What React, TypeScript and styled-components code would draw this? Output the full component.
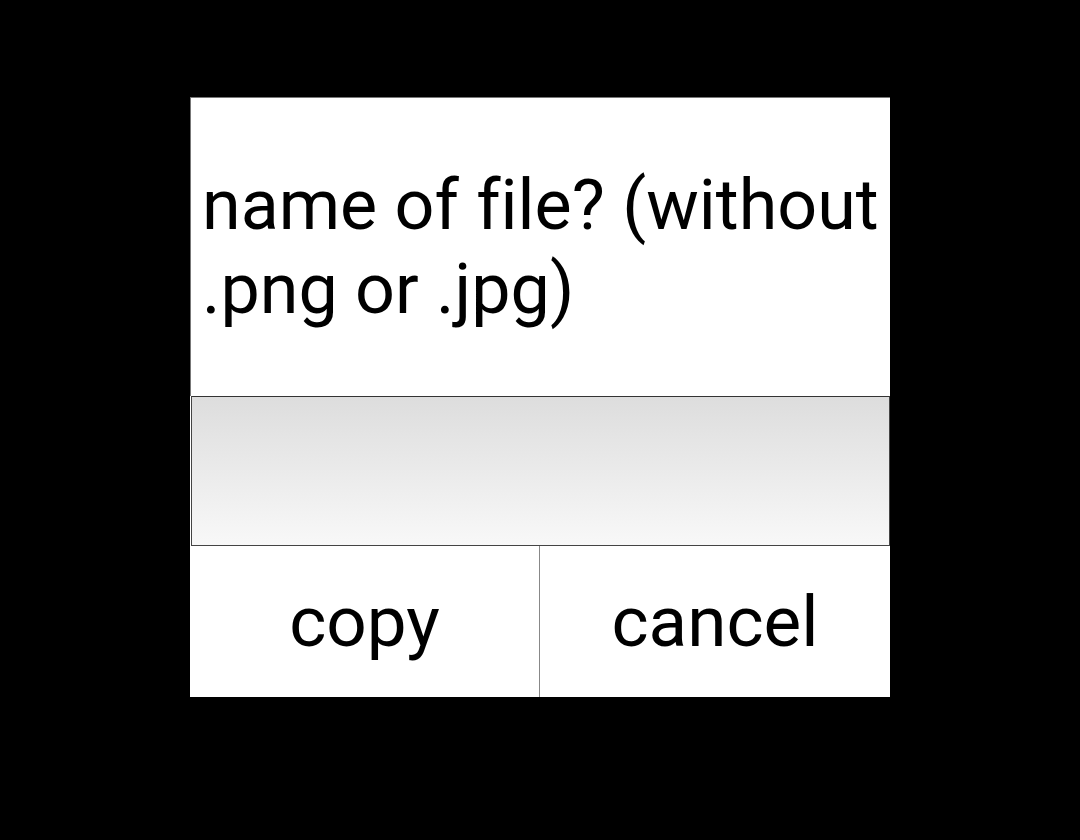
import { createGlobalStyle } from 'styled-components';
import styled from 'styled-components';

const GlobalStyle = createGlobalStyle`
  html, body {
    margin: 0;
    padding: 0;
    background: #000;
  }
  body {
    font-family: Roboto, "Liberation Sans", sans-serif;
  }
`;

const Screen = styled.div`
  width: 1080px;
  height: 840px;
  background: #000;
  display: flex;
  justify-content: center;
  align-items: flex-start;
  padding-top: 97px;
  box-sizing: border-box;
`;

const Dialog = styled.div`
  width: 700px;
  display: flex;
  flex-direction: column;
  background: #fff;
`;

const Prompt = styled.div`
  height: 299px;
  box-sizing: border-box;
  border-top: 1px solid #777;
  border-left: 1px solid #777;
  display: flex;
  align-items: center;
  padding: 0 4px 0 11px;
  font-size: 70px;
  line-height: 84px;
  font-variant-ligatures: none;
  color: #000;
`;

const NameInput = styled.input`
  display: block;
  width: 699px;
  height: 150px;
  margin: 0 0 0 1px;
  box-sizing: border-box;
  border: 1px solid #444;
  border-top-color: #333;
  background: linear-gradient(to bottom, #dddddd 0%, #f8f8f8 100%);
  font-family: inherit;
  font-size: 64px;
  padding: 0 12px;
  outline: none;
`;

const ButtonRow = styled.div`
  display: flex;
  height: 151px;
`;

const DialogButton = styled.button<{ $divider?: boolean }>`
  flex: ${(p) => (p.$divider ? '0 0 350px' : '1')};
  box-sizing: border-box;
  height: 100%;
  margin: 0;
  padding: 0;
  border: none;
  border-right: ${(p) => (p.$divider ? '1px solid #888' : 'none')};
  background: #fff;
  color: #000;
  font-family: Roboto, "Liberation Sans", sans-serif;
  font-size: 71px;
  cursor: pointer;
`;

export default function App() {
  return (
    <>
      <GlobalStyle />
      <Screen>
        <Dialog>
          <Prompt>name of file? (without .png or .jpg)</Prompt>
          <NameInput type="text" />
          <ButtonRow>
            <DialogButton $divider>copy</DialogButton>
            <DialogButton>cancel</DialogButton>
          </ButtonRow>
        </Dialog>
      </Screen>
    </>
  );
}
